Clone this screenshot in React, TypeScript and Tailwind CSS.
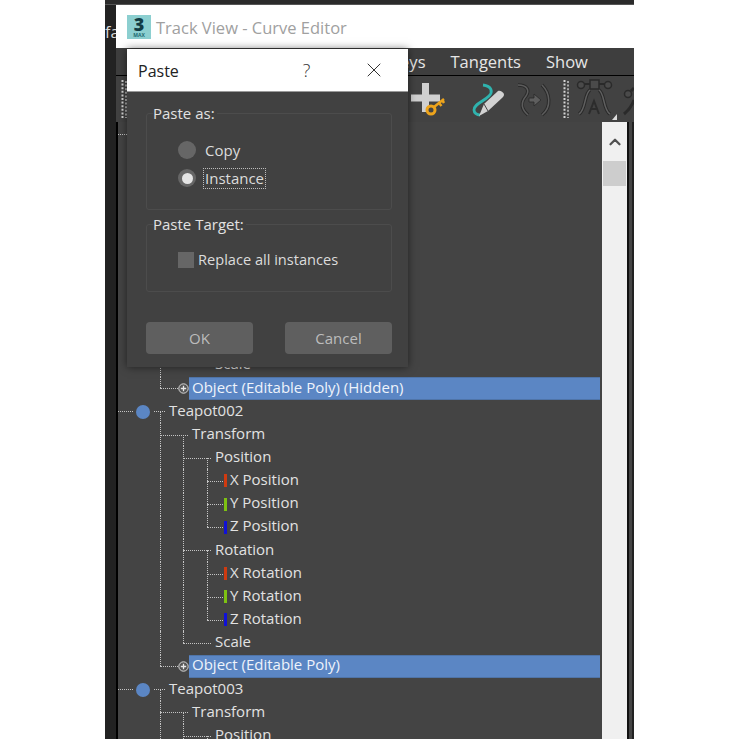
import { X, ChevronUp } from 'lucide-react';

type Kind = 'root' | 'group' | 'track' | 'axis' | 'lastAxis' | 'leaf' | 'object';

interface TreeRow {
  label: string;
  kind: Kind;
  bar?: string;
}

const font = { fontFamily: '"Open Sans", "Liberation Sans", sans-serif' };

function teapotRows(name: string): TreeRow[] {
  return [
    { label: name, kind: 'root' },
    { label: 'Transform', kind: 'group' },
    { label: 'Position', kind: 'track' },
    { label: 'X Position', kind: 'axis', bar: 'bg-[#d03a10]' },
    { label: 'Y Position', kind: 'axis', bar: 'bg-[#7ec212]' },
    { label: 'Z Position', kind: 'lastAxis', bar: 'bg-[#1010d8]' },
    { label: 'Rotation', kind: 'track' },
    { label: 'X Rotation', kind: 'axis', bar: 'bg-[#d03a10]' },
    { label: 'Y Rotation', kind: 'axis', bar: 'bg-[#7ec212]' },
    { label: 'Z Rotation', kind: 'lastAxis', bar: 'bg-[#1010d8]' },
    { label: 'Scale', kind: 'leaf' },
    { label: name === 'Teapot002' ? 'Object (Editable Poly)' : 'Object (Editable Poly) (Hidden)', kind: 'object' },
  ];
}

// rows above Scale of the first teapot sit behind the dialog, so they carry no text
const rows = [...teapotRows('Teapot001'), ...teapotRows('Teapot002'), ...teapotRows('Teapot003')]
  .slice(0, 27)
  .map((row, index) => (index < 10 ? { ...row, label: '' } : row));

const dotted = 'absolute border-dotted border-[#c4c4c4]';

function TreeLine({ row }: { row: TreeRow }) {
  const { kind, label, bar } = row;
  const insideTeapot = kind !== 'root' && kind !== 'object';
  const insideTransform = kind === 'track' || kind === 'axis' || kind === 'lastAxis';

  return (
    <div className="relative flex h-[23.17px] items-center text-[15px] text-[#e2e2e2]">
      {/* trunk at teapot level */}
      {insideTeapot && <span className={`${dotted} left-[42px] inset-y-0 border-l`} />}
      {kind === 'root' && <span className={`${dotted} left-[42px] top-1/2 h-1/2 border-l`} />}
      {kind === 'object' && <span className={`${dotted} left-[42px] top-0 h-1/2 border-l`} />}

      {/* trunk at transform level */}
      {insideTransform && <span className={`${dotted} left-[65px] inset-y-0 border-l`} />}
      {kind === 'group' && <span className={`${dotted} left-[65px] top-1/2 h-1/2 border-l`} />}
      {kind === 'leaf' && <span className={`${dotted} left-[65px] top-0 h-1/2 border-l`} />}

      {/* trunk at track level */}
      {kind === 'axis' && <span className={`${dotted} left-[89px] inset-y-0 border-l`} />}
      {kind === 'track' && <span className={`${dotted} left-[89px] top-1/2 h-1/2 border-l`} />}
      {kind === 'lastAxis' && <span className={`${dotted} left-[89px] top-0 h-1/2 border-l`} />}

      {kind === 'root' && (
        <>
          <span className={`${dotted} left-0 top-1/2 w-[15px] border-t`} />
          <span className="absolute left-[18px] top-[5px] h-[14px] w-[14px] rounded-full bg-[#5b86c4]" />
          <span className={`${dotted} left-[36px] top-1/2 w-[11px] border-t`} />
          <span className="pb-[3px] pl-[51px]">{label}</span>
        </>
      )}
      {kind === 'group' && (
        <>
          <span className={`${dotted} left-[42px] top-1/2 w-[28px] border-t`} />
          <span className="pb-[3px] pl-[74px]">{label}</span>
        </>
      )}
      {(kind === 'track' || kind === 'leaf') && (
        <>
          <span className={`${dotted} left-[65px] top-1/2 w-[28px] border-t`} />
          <span className="pb-[3px] pl-[97px]">{label}</span>
        </>
      )}
      {(kind === 'axis' || kind === 'lastAxis') && (
        <>
          <span className={`${dotted} left-[89px] top-1/2 w-[16px] border-t`} />
          <span className={`absolute left-[106px] top-[5px] h-[13px] w-[3px] ${bar}`} />
          <span className="pb-[3px] pl-[112px]">{label}</span>
        </>
      )}
      {kind === 'object' && (
        <>
          <span className={`${dotted} left-[42px] top-1/2 w-[18px] border-t`} />
          <svg width="11" height="11" viewBox="0 0 11 11" className="absolute left-[60px] top-[6px]">
            <circle cx="5.5" cy="5.5" r="4.700" fill="#555555" stroke="#d8d8d8" strokeWidth="1" />
            <path d="M2.800 5.500H8.200M5.500 2.800V8.200" stroke="#e8e8e8" strokeWidth="1.300" />
          </svg>
          <span className="ml-[71px] mr-[2px] flex h-full flex-1 items-center border-y border-[#4f74a8] bg-[#5b86c4] pb-[3px] pl-[3px] text-[#eef3fb]">
            {label}
          </span>
        </>
      )}
    </div>
  );
}

function GripDots() {
  return (
    <svg width="7" height="40" viewBox="0 0 7 40" className="shrink-0">
      <path d="M1.5 1V39" stroke="#d4d4d4" strokeWidth="2" strokeDasharray="2 1.6" />
      <path d="M5 2V39" stroke="#a8a8a8" strokeWidth="2" strokeDasharray="2 1.6" />
    </svg>
  );
}

function KeyPlusIcon() {
  return (
    <svg width="36" height="38" viewBox="410 80 36 38" className="shrink-0">
      <path d="M411 98H440M425.5 83V112" stroke="#d0d0d0" strokeWidth="7" />
      <circle cx="431" cy="110" r="4" fill="#444444" stroke="#eda41c" strokeWidth="3" />
      <path d="M434 107L444 99M439 103l2.500 3M442.500 100.500l1.500 2.500" fill="none" stroke="#eda41c" strokeWidth="2.500" />
    </svg>
  );
}

function DrawCurveIcon() {
  return (
    <svg width="36" height="38" viewBox="470 80 36 38" className="shrink-0">
      <path d="M483 85C492 86 493 92 489 96C483 102 474 104 474 110C474 113 477 115 480 115" fill="none" stroke="#2fb3ae" strokeWidth="2.800" />
      <path d="M479 116L484 104L498 91C500 90 503 92 504 94C504 96 503 97 502 98L488 111Z" fill="#d2d2d2" />
      <path d="M484 104L488 111" stroke="#444444" strokeWidth="1" />
    </svg>
  );
}

function CurveArrowIcon() {
  return (
    <svg width="36" height="38" viewBox="516 80 36 38" className="shrink-0">
      <path d="M518 85C527 85 530 90 526 96C521 102 520 108 528 115" fill="none" stroke="#2a2a2a" strokeWidth="3.500" />
      <path d="M518 85C527 85 530 90 526 96C521 102 520 108 528 115" fill="none" stroke="#5c5c5c" strokeWidth="1.500" />
      <path d="M542 85C550 93 552 107 542 115" fill="none" stroke="#2a2a2a" strokeWidth="3.500" />
      <path d="M542 85C550 93 552 107 542 115" fill="none" stroke="#5c5c5c" strokeWidth="1.500" />
      <path d="M529 98H534V94L541 100L534 106V102H529Z" fill="#5e5e5e" stroke="#2a2a2a" strokeWidth="0.800" />
    </svg>
  );
}

function TangentAIcon() {
  return (
    <svg width="42" height="44" viewBox="576 79 42 44" className="shrink-0">
      <path d="M582 86H610" stroke="#2a2a2a" strokeWidth="2" />
      <circle cx="581" cy="87" r="3.500" fill="#4a4a4a" stroke="#2a2a2a" strokeWidth="1.500" />
      <circle cx="608" cy="87" r="3.500" fill="#4a4a4a" stroke="#2a2a2a" strokeWidth="1.500" />
      <rect x="590" y="82" width="9" height="9" fill="#4a4a4a" stroke="#2a2a2a" strokeWidth="1.500" />
      <path d="M590 92C584 96 586 112 579 116M599 92C605 96 603 112 610 116" fill="none" stroke="#2a2a2a" strokeWidth="3.500" />
      <path d="M590 92C584 96 586 112 579 116M599 92C605 96 603 112 610 116" fill="none" stroke="#606060" strokeWidth="1.500" />
      <path d="M589 116L594 103L599 116M591 111H597" fill="none" stroke="#2c2c2c" strokeWidth="2" />
      <path d="M612 122L617 122L617 116Z" fill="#dcdcdc" />
    </svg>
  );
}

function PartialIcon() {
  return (
    <svg width="13" height="44" viewBox="622 79 13 44" className="shrink-0">
      <circle cx="628" cy="96" r="3.500" fill="#4a4a4a" stroke="#2a2a2a" strokeWidth="1.500" />
      <path d="M634 90L631 93M634 102C632 108 629 112 624 116" fill="none" stroke="#2a2a2a" strokeWidth="3" />
    </svg>
  );
}

function GroupBox({ label, className, children }: { label: string; className: string; children: React.ReactNode }) {
  return (
    <div className={`relative rounded-[3px] border border-[#4c4c4c] ${className}`}>
      <span className="absolute left-[6px] top-[-12px] bg-[#414141] pr-[2px] text-[15px] leading-[22px] text-[#e2e2e2]">{label}</span>
      {children}
    </div>
  );
}

function PasteDialog() {
  return (
    <div className="absolute left-[127px] top-[49px] flex h-[318px] w-[281px] flex-col bg-[#414141] shadow-[0_0_8px_rgba(0,0,0,0.55)]">
      <div className="flex h-[43px] shrink-0 items-center border-b border-[#9a9a9a] bg-white pl-[11px] text-[16px] text-[#222222]">
        <span className="pt-[1px]">Paste</span>
        <span className="ml-[124px] text-[18px] font-light text-[#333333]">?</span>
        <X className="ml-[52px] h-[24px] w-[24px] text-[#333333]" strokeWidth={1} />
      </div>
      <div className="flex flex-1 flex-col pl-[19px] pr-[16px] pt-[21px]">
        <GroupBox label="Paste as:" className="h-[97px]">
          <div className="flex flex-col pl-[31px] pt-[22px] text-[15px] text-[#dcdcdc]">
            <div className="flex h-[28px] items-center">
              <span className="h-[18px] w-[18px] rounded-full bg-[#666666]" />
              <span className="ml-[8px] px-[1px]">Copy</span>
            </div>
            <div className="flex h-[28px] items-center">
              <span className="flex h-[18px] w-[18px] items-center justify-center rounded-full bg-[#666666]">
                <span className="h-[11px] w-[11px] rounded-full bg-[#e4e4e4]" />
              </span>
              <span className="ml-[7px] border border-dotted border-[#bdbdbd] px-[1px] leading-[19px]">Instance</span>
            </div>
          </div>
        </GroupBox>
        <GroupBox label="Paste Target:" className="mt-[14px] h-[68px]">
          <div className="flex items-center pl-[31px] pt-[24px] text-[14.600px] text-[#dcdcdc]">
            <span className="h-[16px] w-[16px] bg-[#666666]" />
            <span className="ml-[4px]">Replace all instances</span>
          </div>
        </GroupBox>
        <div className="mt-[30px] flex justify-between">
          <button type="button" className="h-[32px] w-[107px] rounded-[4px] bg-[#5f5f5f] text-[15px] text-[#bcbcbc]">
            OK
          </button>
          <button type="button" className="h-[32px] w-[107px] rounded-[4px] bg-[#5f5f5f] text-[15px] text-[#bcbcbc]">
            Cancel
          </button>
        </div>
      </div>
    </div>
  );
}

export default function App() {
  return (
    <div className="relative flex h-[739px] w-[739px] overflow-hidden bg-white" style={font}>
      <div className="ml-[105px] flex h-full w-[529px] flex-col">
        <div className="h-[5px] shrink-0 border-b border-[#555555] bg-[#2b2b2b]" />
        <div className="flex min-h-0 flex-1">
          <div className="w-[11px] shrink-0 overflow-hidden bg-[#222222]">
            <div className="mt-[16px] whitespace-nowrap text-[16px] leading-[22px] text-[#d8d8d8]">fa</div>
          </div>
          <div className="flex min-w-0 flex-1 flex-col">
            <div className="flex h-[43px] shrink-0 items-center bg-white pl-[11px]">
              <div className="flex h-[24px] w-[24px] flex-col items-center bg-[#8ccfd0]">
                <span className="h-[18px] text-[18px] font-extrabold leading-[18px] text-[#123c44]">3</span>
                <span className="text-[5px] font-bold leading-[5px] text-[#1c6a70]">MAX</span>
              </div>
              <span className="ml-[5px] pt-[3px] text-[16.500px] text-[#a0a0a0]">Track View - Curve Editor</span>
            </div>
            <div className="flex h-[28px] shrink-0 items-center gap-[25px] border-b border-black bg-[#3e3e3e] pl-[274px] pt-[2px] text-[16.500px] text-[#e6e6e6]">
              <span>Keys</span>
              <span>Tangents</span>
              <span>Show</span>
            </div>
            <div className="flex h-[46px] shrink-0 items-center overflow-hidden bg-[#424242] pl-[5px]">
              <GripDots />
              <div className="ml-[282px]">
                <KeyPlusIcon />
              </div>
              <div className="ml-[24px]">
                <DrawCurveIcon />
              </div>
              <div className="ml-[10px]">
                <CurveArrowIcon />
              </div>
              <div className="ml-[11px]">
                <GripDots />
              </div>
              <div className="ml-[6px]">
                <TangentAIcon />
              </div>
              <div className="ml-[4px]">
                <PartialIcon />
              </div>
            </div>
            <div className="flex min-h-0 flex-1">
              <div className="w-[2px] shrink-0 bg-black" />
              <div className="min-w-0 flex-1 overflow-hidden bg-[#444444]">
                {rows.map((row, index) => (
                  <TreeLine key={index} row={row} />
                ))}
              </div>
              <div className="flex w-[25px] shrink-0 flex-col bg-[#f0f0f0]">
                <div className="flex h-[39px] items-center justify-center">
                  <ChevronUp className="h-[18px] w-[18px] text-[#505050]" strokeWidth={3} />
                </div>
                <div className="mx-[1px] h-[25px] bg-[#cdcdcd]" />
              </div>
              <div className="flex w-[7px] shrink-0">
                <div className="w-[2px] bg-[#111111]" />
                <div className="w-[3px] bg-[#444444]" />
                <div className="w-[2px] bg-[#222222]" />
              </div>
            </div>
          </div>
        </div>
      </div>
      <PasteDialog />
    </div>
  );
}
